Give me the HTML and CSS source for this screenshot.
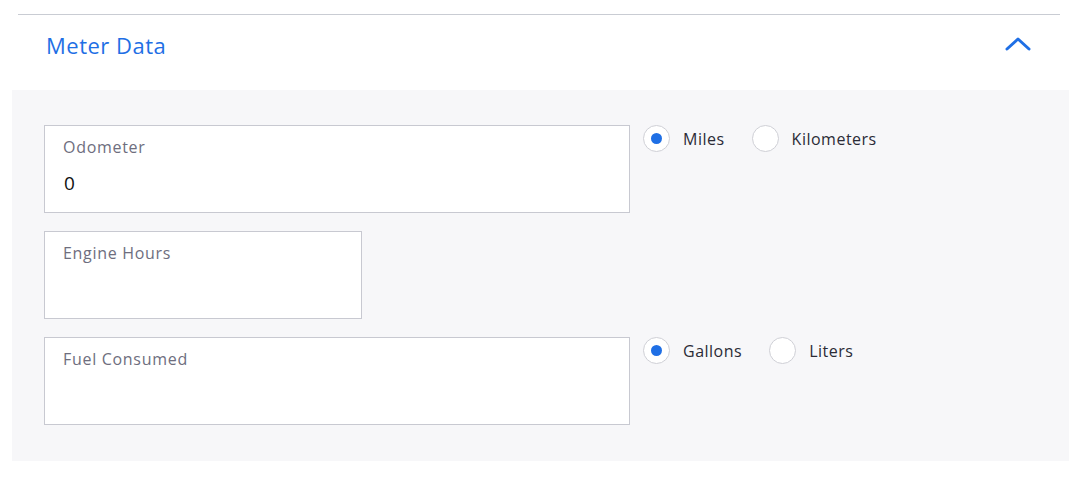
FILE: index.html
```html
<!DOCTYPE html>
<html lang="en">
<head>
  <meta charset="UTF-8" />
  <meta name="viewport" content="width=device-width, initial-scale=1.0" />
  <title>Meter Data</title>
  <link rel="stylesheet" href="styles.css">
</head>
<body>

<section class="meter">
  <header class="meter-head">
    <h2>Meter Data</h2>
    <button class="collapse" aria-label="Collapse">
      <svg width="26" height="14" viewBox="0 0 26 14">
        <path d="M2 12 L13 2 L24 12" fill="none" stroke="#1f6fe5" stroke-width="3" stroke-linecap="round" stroke-linejoin="round"/>
      </svg>
    </button>
  </header>

  <div class="meter-body">
    <div class="row">
      <label class="field wide">
        <span class="field-label">Odometer</span>
        <input type="text" value="0">
      </label>
      <div class="units">
        <label class="radio"><input type="radio" name="dist" checked><span class="dot"></span>Miles</label>
        <label class="radio"><input type="radio" name="dist"><span class="dot"></span>Kilometers</label>
      </div>
    </div>

    <div class="row">
      <label class="field narrow">
        <span class="field-label">Engine Hours</span>
        <input type="text" value="">
      </label>
    </div>

    <div class="row">
      <label class="field wide">
        <span class="field-label">Fuel Consumed</span>
        <input type="text" value="">
      </label>
      <div class="units">
        <label class="radio"><input type="radio" name="fuel" checked><span class="dot"></span>Gallons</label>
        <label class="radio"><input type="radio" name="fuel"><span class="dot"></span>Liters</label>
      </div>
    </div>
  </div>
</section>

</body>
</html>
```

FILE: styles.css
```css
body {
  font-family: 'Open Sans', sans-serif;
  background-color: #FFFFFF;
  color: #2b2b36;
  margin: 0;
  padding-top: 14px;
}
.meter-head {
  margin: 0 23px 0 18px;
  border-top: 1px solid #c9ccd3;
  height: 75px;
  display: flex;
  align-items: flex-start;
  justify-content: space-between;
}
.meter-head h2 {
  margin: 15px 0 0 28px;
  font-size: 22px;
  line-height: 30px;
  font-weight: 400;
  letter-spacing: 0.5px;
  color: #1f6fe5;
}
.collapse {
  background: none;
  border: 0;
  padding: 0;
  margin: 22px 29px 0 0;
  display: flex;
  cursor: pointer;
}
.meter-body {
  margin: 0 14px 0 12px;
  background-color: #f7f7f9;
  padding: 35px 32px 36px;
  display: flex;
  flex-direction: column;
  gap: 18px;
}
.row {
  display: flex;
  gap: 13px;
  align-items: flex-start;
}
.field {
  display: flex;
  flex-direction: column;
  box-sizing: border-box;
  height: 88px;
  background-color: #FFFFFF;
  border: 1px solid #c8c9d1;
  padding: 10px 18px 0;
}
.field.wide {
  width: 586px;
}
.field.narrow {
  width: 318px;
}
.field-label {
  font-size: 16px;
  line-height: 22px;
  letter-spacing: 0.7px;
  color: #6e6e7e;
}
.field input {
  border: 0;
  outline: none;
  padding: 0 0 0 1px;
  margin-top: 12px;
  height: 26px;
  font-family: inherit;
  font-size: 19px;
  color: #111;
  background: transparent;
}
.units {
  display: flex;
  gap: 27px;
}
.radio {
  display: flex;
  align-items: center;
  gap: 13px;
  height: 27px;
  line-height: 26px;
  font-size: 16px;
  letter-spacing: 0.5px;
  cursor: pointer;
}
.radio input {
  display: none;
}
.dot {
  box-sizing: border-box;
  width: 27px;
  height: 27px;
  border-radius: 50%;
  border: 1px solid #cfd0d6;
  background-color: #FFFFFF;
  display: flex;
  align-items: center;
  justify-content: center;
}
.radio input:checked + .dot::after {
  content: "";
  width: 11px;
  height: 11px;
  border-radius: 50%;
  background-color: #1f6fe5;
}
```
